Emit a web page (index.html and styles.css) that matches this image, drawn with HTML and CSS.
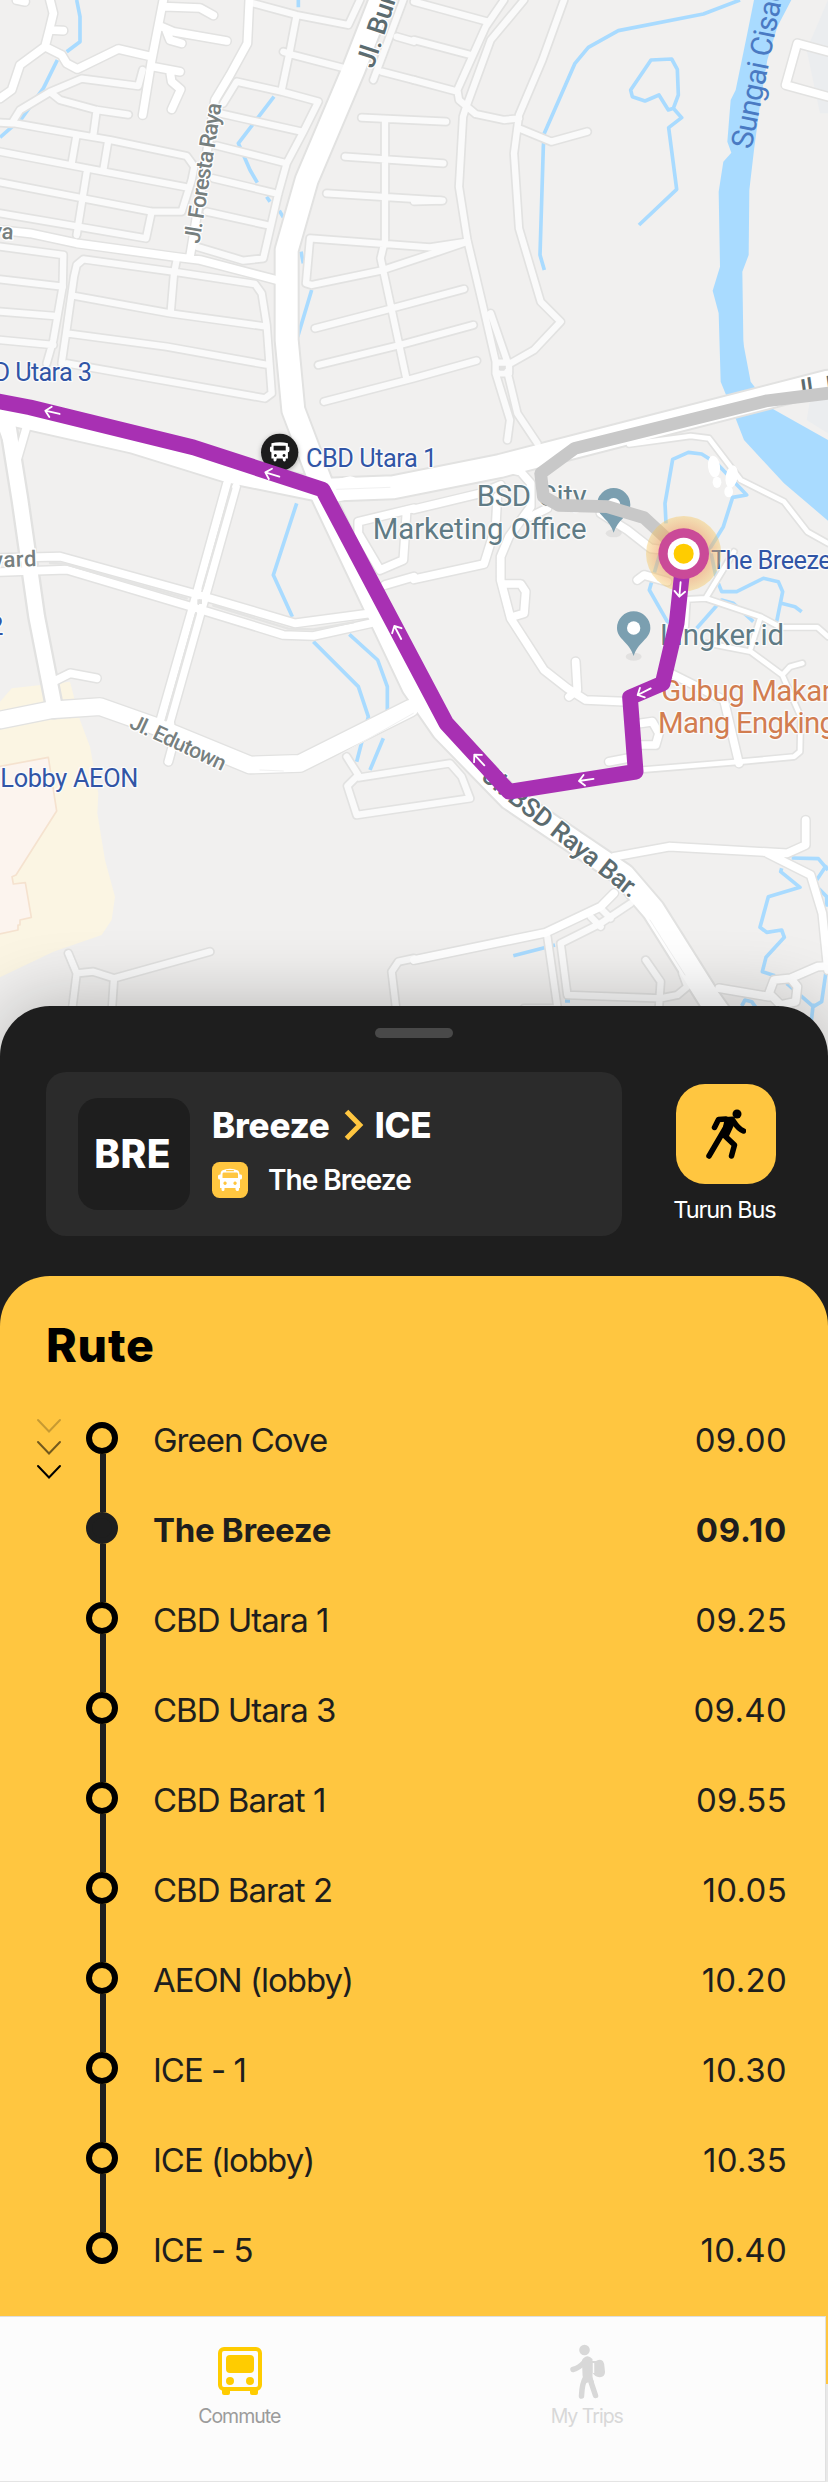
FILE: index.html
```
<!DOCTYPE html>
<html lang="id">
<head>
<meta charset="utf-8">
<title>Rute – Breeze ICE</title>
<link rel="stylesheet" href="styles.css">
</head>
<body>
<main class="screen">
  <svg class="map" viewBox="0 0 2484 3180" role="img" aria-label="Peta rute">
    <defs>
      <g id="lanes">
        <g>
          <path d="M0 368 35 370 60 330 150 276 245 236 415 258 428 210M150 276 180 300 290 330 385 344M290 330 280 405M0 368 45 370 230 403 330 420 560 468 583 500 575 540 545 635 455 635 0 547M0 455 260 505 560 562M230 403 215 490M325 420 310 510M262 505 230 705M455 635 438 715 235 680 0 640M0 740 190 765 188 860 0 838M0 935 165 948"/>
          <path d="M185 1090 198 1000 222 830 230 795 250 778 520 815 765 852 785 880 800 975 815 1180 795 1195 200 1090M225 888 510 940 800 980M200 1000 500 1040 805 1095M530 780 522 820 512 938M0 1020 160 1035M188 860 160 1020 140 1090"/>
          <path d="M590 740 730 782 790 775 835 580 860 490 910 395 955 305 845 275 710 245 670 310M660 340 905 395M650 437 860 490M640 535 835 582M620 635 800 675M760 10 890 45 1045 75 1080 0M890 45 870 150 845 270M1035 205 880 165 850 155"/>
          <path d="M1210 0 1120 240M1190 110 1242 125M1145 215 1242 240M1085 353 1338 365M1035 470 1330 490M980 580 1328 602M1155 360 1155 720 1142 775 1220 1140M1402 725 1290 742 930 715 918 850 935 855 1142 812 1300 760 1402 725M945 985 1150 932 1392 867M955 1095 1200 1035 1420 975M972 1205 1240 1135 1430 1082"/>
        </g>
        <g transform="translate(1242 0)">
          <path d="M0 5 220 65M0 120 170 165M0 240 130 275M270 0 215 80 130 270 135 300 185 342 270 360 315 355M330 0 230 120 155 325 147 350 135 560 160 720 205 910 245 1085M0 604 80 602M450 0 385 180 315 345 300 460 315 685 380 905 440 965 360 1050 290 1090M315 385 412 425 520 395M230 940 280 1085M245 1088h40v32h-40zM245 1120 288 1260 280 1320M280 1115 310 1240 370 1330"/>
        </g>
        <g transform="translate(0 2040)">
          <path d="M205 820 230 880 215 1000M230 880 280 875 342 895 630 815M342 895 335 1000M1242 835 1195 845 1175 875 1190 1000M1040 230 1075 285 1042 318 1070 405 1410 355 1385 290 1350 250 1075 293"/>
        </g>
        <g transform="translate(1242 2040)">
          <path d="M650 670 560 730 440 790 460 945 740 955 790 945 820 920 805 880M695 840 740 905 735 980M400 770 430 980M530 710 560 740M560 685 590 715M330 985 430 985"/>
        </g>
      </g>
      <g id="streets">
        <g>
          <path d="M50 0 75 5M150 0 160 40 148 90 135 140 60 195 35 270 0 295M150 90 190 92M135 140 185 165 200 190 232 207 355 147 455 170M490 0 455 180 428 345M490 20 600 24 640 46M485 80 520 95 680 123M500 95 510 120 545 130M460 200 540 215M510 215 515 245 542 268 515 328M0 690 90 700 230 730 520 770 600 780 830 840M748 0 742 130 690 225 645 300 605 560 570 770"/>
          <path d="M0 1260 50 1400M80 1280 45 1400M0 1674 180 1670 590 1783 885 1870 1110 1840M0 1716 200 1709 580 1822 850 1905 940 1908 1120 1868M681 1450 587 1790 480 2165M708 1460 613 1800 510 2165 520 2230 505 2285M170 2040 210 2020 290 2035M1242 1525 1075 1565 1075 1600 1140 1710 1210 1680 1220 1530M1155 1755 1242 1730"/>
        </g>
        <g transform="translate(1242 1020)">
          <path d="M0 508 200 460 260 435M0 718 210 672 245 560 250 470M250 380 320 395 350 430 350 500 285 590 260 650 260 720 290 835 390 990 460 1045 515 1080 630 1085M350 530 400 505M265 732 320 732 335 755 330 820 290 832M560 520 640 570 710 625 750 630M670 720 690 705 760 725M485 965 490 1050 465 1070M770 1000 930 1080 975 1270M680 1150 715 1145 735 1180 725 1215 680 1215M585 1265 640 1255"/>
        </g>
        <g transform="translate(1242 2040)">
          <path d="M600 530 765 500 1120 520 1175 495V420M1060 520 1190 585 1225 700 1242 870M600 640 560 680 395 758 0 840M1242 858 1210 860 1130 895 1080 900 1065 940 1100 975 1145 965 1150 920 1130 895M915 925 1065 950"/>
          <path d="M1242 155 1150 130 1115 255 1242 290" transform="translate(0 -2040)"/>
        </g>
      </g>
      <g id="paths">
        <path d="M1887 1333 2072 1308 2127 1315 2222 1440 2352 1505 2422 1595 2484 1630M2202 1655 2117 1795 2062 1798 2057 1880M2117 1795 2282 1850 2342 1882 2452 1882 2484 1910M2282 1850 2252 1945M2122 1930 2252 1955 2347 2025 2402 2150 2400 2255 2382 2270 2222 2285 1892 2312M2347 2025 2370 2000 2407 1990"/>
      </g>
      <g id="avenues">
        <path d="M0 2160 150 2130 300 2120 470 2180 750 2295 900 2290 1230 2125" stroke-width="50"/>
        <path d="M20 1250 60 1500 110 1850 165 2130" stroke-width="44"/>
        <path d="M1150 -20 1060 210 920 540 860 750 860 1020 880 1230 975 1480 1050 1462" stroke-width="66"/>
        <path d="M0 1235 400 1325 690 1415 960 1470 1180 1462 1500 1398 1880 1300 2484 1145" stroke-width="66"/>
        <path d="M960 1470 1240 2060 1330 2190 1530 2395 1870 2625 1960 2730 2130 3000 2180 3070" stroke-width="66"/>
      </g>
    </defs>

    <rect width="2484" height="3180" fill="#f1f0ef"/>
    <path fill="#fbf5e3" d="M0 2105 35 2065 210 2045 240 2160 270 2240 295 2380 292 2440 315 2580 345 2690 335 2760 305 2805 160 2855 0 2932Z"/>
    <path class="mall" d="M-5 2300 145 2272 170 2433 48 2625 36 2630 40 2652 76 2648 94 2752 60 2760V2775H54V2790L-5 2803Z"/>
    <path fill="#ebedef" d="M2484 0 2420 150 2460 340 2484 340ZM2484 1160 2430 1200 2420 1260 2484 1300Z"/>

    <g class="water">
      <path d="M230 0 240 50V125L200 155M172 180 130 265 65 355 0 412M895 0V22M822 290 715 430 750 510 772 548M800 590 810 605M838 632 850 652M903 755 910 790M935 870 893 1010M850 1210 880 1300M890 1510 820 1725 877 1850M940 1925 1075 2060 1105 2150 1070 2285M1048 1903 1133 1980 1162 2060V2130M1150 2215 1110 2310"/>
      <path d="M2220 0 2110 42 1855 92 1765 142 1725 190 1633 400 1630 440 1620 765 1633 810M1917 675 2030 568 2006 383 2045 353 2020 325 2035 285 2032 208 2015 177 1953 180 1892 270 1897 290 1935 303 1977 285 2005 330 2020 325"/>
      <path d="M1998 1570 1995 1510 2018 1378 2065 1357 2105 1362 2150 1390 2240 1485 2198 1492 2170 1580 2130 1645 2150 1740M1980 1660 1948 1770 2005 1870M2090 1885 2165 1800 2200 1810 2260 1865M2155 1750 2165 1775 2210 1775 2290 1735 2335 1745 2348 1775 2330 1865M2344 1810 2385 1820 2405 1835"/>
      <path d="M2375 2574 2455 2576 2484 2610M2345 2605 2342 2615 2400 2662 2305 2690 2280 2782 2300 2797 2345 2790 2353 2812 2298 2872 2287 2915 2325 2927M2450 2640 2480 2595M2450 2660 2480 2690V2720M2478 2915 2465 3005 2440 3020 2360 2950M2225 3018 2235 3000 2255 3005 2280 3040M2440 3010 2432 3080M1540 2867 1665 2835M1695 3003H1710"/>
      <path class="river" d="M2262 0 2242 100 2207 270 2192 300 2182 425 2194 458 2170 485 2156 575 2160 800 2138 872 2156 940 2162 1145 2204 1248 2232 1320 2352 1450 2484 1562V1320L2312 1223 2252 1145 2232 1040 2230 1020 2227 815 2246 765 2248 570 2262 450 2282 300 2302 180 2332 80 2374 0Z"/>
    </g>

    <g class="casing">
      <use href="#lanes" stroke-width="29"/>
      <use href="#streets" stroke-width="32"/>
      <use href="#paths" stroke-width="24"/>
      <g stroke-width="78"><path d="M1150 -20 1060 210 920 540 860 750 860 1020 880 1230 975 1480M0 1235 400 1325 690 1415 960 1470 1180 1462 1500 1398 1880 1300 2484 1145M960 1470 1240 2060 1330 2190 1530 2395 1870 2625 1960 2730 2130 3000 2180 3070"/></g>
      <path stroke-width="58" d="M0 2160 150 2130 300 2120 470 2180 750 2295 900 2290 1230 2125M20 1250 60 1500 110 1850 165 2130"/>
    </g>
    <use href="#lanes" class="road lane"/>
    <use href="#streets" class="road street"/>
    <use href="#paths" class="road footway"/>
    <path class="gap" d="M150 1689 190 1691 560 1795M640 1817 865 1886 940 1888 1060 1867M694 1465 608 1765M588 1840 498 2160"/>
    <rect class="gap-box" x="592" y="1798" width="14" height="14"/>
    <rect class="gap-box" x="1499" y="1098" width="14" height="14"/>
    <use href="#avenues" class="road"/>
    <path class="median" d="M1010 1468 1170 1462M1240 2140 1010 2270M780 2310 850 2313M1950 2760 2055 2925"/>

    <g class="road-label">
      <text transform="translate(598 733) rotate(-81)" font-size="67" textLength="426">Jl. Foresta Raya</text>
      <text class="major" transform="translate(1120 208) rotate(-72)" font-size="80" textLength="330">Jl. Bunga</text>
      <text x="-28" y="716" font-size="66" transform="rotate(4 0 718)">ya</text>
      <text x="-78" y="1702" font-size="66" textLength="188" transform="rotate(-2 0 1702)">levard</text>
      <text transform="translate(385 2182) rotate(25)" font-size="64" textLength="310">Jl. Edutown</text>
      <text class="major" transform="translate(1442 2338) rotate(38.500)" font-size="78" textLength="575">Jl. BSD Raya Bar.</text>
      <text class="major" transform="translate(2384 1194) rotate(-8)" font-size="74">Jl. BSD</text>
    </g>
    <text class="river-label" transform="translate(2254 450) rotate(-78.500)" font-size="90" textLength="500">Sungai Cisad</text>
    <g fill="#fff">
      <ellipse cx="2142" cy="1400" rx="18" ry="33" transform="rotate(-8 2142 1400)"/>
      <ellipse cx="2151" cy="1447" rx="13" ry="17"/>
      <ellipse cx="2195" cy="1430" rx="18" ry="34" transform="rotate(10 2195 1430)"/>
      <ellipse cx="2186" cy="1475" rx="13" ry="17"/>
    </g>

    <g class="place">
      <text x="1430" y="1518" textLength="330">BSD City</text>
      <text x="1118" y="1617" textLength="642">Marketing Office</text>
      <text x="1980" y="1934" textLength="372">Lingker.id</text>
      <g class="food">
        <text x="1984" y="2103" textLength="530">Gubug Makan</text>
        <text x="1974" y="2200" textLength="534">Mang Engking</text>
      </g>
    </g>
    <g class="stop-label">
      <text x="-112" y="1142" textLength="388">CBD Utara 3</text>
      <text x="918" y="1402" textLength="394">CBD Utara 1</text>
      <text x="2133" y="1706" textLength="362">The Breeze</text>
      <text x="1" y="2361" textLength="414">Lobby AEON</text>
      <text x="-32" y="1906">2</text>
    </g>

    <g>
      <g transform="translate(1841 1514)">
        <ellipse cy="86" rx="24" ry="12" fill="#000" opacity=".06"/>
        <path fill="#7b9fb0" d="M0-50A50 50 0 0 1 50 0C50 34 14 40 0 84-14 40-50 34-50 0A50 50 0 0 1 0-50Z"/><circle r="20" fill="#fff"/>
      </g>
      <g transform="translate(1901 1884)">
        <ellipse cy="86" rx="24" ry="12" fill="#000" opacity=".06"/>
        <path fill="#7b9fb0" d="M0-50A50 50 0 0 1 50 0C50 34 14 40 0 84-14 40-50 34-50 0A50 50 0 0 1 0-50Z"/><circle r="20" fill="#fff"/>
      </g>
    </g>

    <circle class="bus-marker" cx="839" cy="1357" r="56" fill="#1c1c1c"/>
    <g transform="translate(839 1357) scale(2.6)" fill="#fff">
      <path fill-rule="evenodd" d="M-9.500-10.500Q0-13 9.500-10.500V-6.500H11Q12 0 9.500 0V7H7Q7.500 10.500 5.500 10.500T3.500 7H-3.500Q-3.500 10.500-5.500 10.500T-7 7H-9.500V0Q-12 0-11-6.500H-9.500ZM-7-7.500V-2H7V-7.500ZM-5 2a1.700 1.700 0 1 0 .1 0ZM5 2a1.700 1.700 0 1 0 .1 0Z"/>
    </g>

    <path class="past-route" d="M2490 1179 2302 1202 1724 1345 1622 1420 1630 1490 1677 1516 1822 1520 1932 1553 2010 1625"/>
    <radialGradient id="halo"><stop offset=".6" stop-color="#ee9a66" stop-opacity=".6"/><stop offset="1" stop-color="#f5c75f" stop-opacity=".42"/></radialGradient>
    <circle cx="2051" cy="1661" r="113" fill="url(#halo)"/>
    <path class="route" d="M-10 1203 90 1222 580 1342 968 1469 1339 2170 1527 2375 1907 2315 1890 2092 1988 2050 2030 1870 2046 1720"/>
    <g class="direction">
      <path d="M44 0H0M16-16 0 0 16 16" transform="translate(136 1232) rotate(13)"/>
      <path d="M44 0H0M16-16 0 0 16 16" transform="translate(796 1417) rotate(17)"/>
      <path d="M44 0H0M16-16 0 0 16 16" transform="translate(1183 1878) rotate(62)"/>
      <path d="M44 0H0M16-16 0 0 16 16" transform="translate(1423 2264) rotate(47)"/>
      <path d="M44 0H0M16-16 0 0 16 16" transform="translate(1737 2343) rotate(-8)"/>
      <path d="M44 0H0M16-16 0 0 16 16" transform="translate(1913 2085) rotate(-27)"/>
      <path d="M44 0H0M16-16 0 0 16 16" transform="translate(2038 1790) rotate(-85)"/>
    </g>
    <circle cx="2051" cy="1661" r="76" fill="#ca4a98"/>
    <circle cx="2051" cy="1661" r="48" fill="#fff"/>
    <circle cx="2051" cy="1661" r="30" fill="#fc0"/>
  </svg>

  <section class="sheet">
    <div class="handle"></div>
    <div class="trip">
      <div class="trip-card">
        <div class="code">BRE</div>
        <div class="trip-info">
          <h2 class="trip-title"><span class="from">Breeze</span>
            <svg class="chevron" viewBox="0 0 20 32"><path d="M2.500 2.500 15.800 16 2.500 29.500"/></svg>
            <span class="to">ICE</span></h2>
          <div class="trip-stop">
            <svg class="bus-badge" viewBox="0 0 36 36"><rect width="36" height="36" rx="7.500" fill="#ffc640"/>
              <path fill="#fff" fill-rule="evenodd" d="M10 8.500Q18 5 26 8.500Q27.500 9.500 27.500 12.500H29Q30 12.500 30 14V16Q30 17.500 28 17.500V26H27V27.500Q27 29 25.500 29T23.500 27.500V26H12.500V27.500Q12.500 29 11 29T9.500 27.500V26H8V17.500Q6 17.500 6 16V14Q6 12.500 8 12.500H8.500Q8.500 9.500 10 8.500ZM11.500 10.500Q10.500 10.500 10.500 12V16H26V12Q26 10.500 25 10.500ZM13 19.500a1.700 1.700 0 1 0 .1 0ZM23 19.500a1.700 1.700 0 1 0 .1 0Z"/>
              <rect x="14" y="8" width="8" height="1.300" rx=".6" fill="#ffc640"/></svg>
            <span>The Breeze</span>
          </div>
        </div>
      </div>
      <button class="alight" type="button">
        <span class="alight-icon">
          <svg viewBox="0 0 40 50"><circle cx="31" cy="5" r="4.500"/>
            <path class="limb" d="M8.500 18.500 12.500 10.500 20 10M28 13Q32 19.500 37.500 22M3 47 20 18M19 27 28.500 36 25.500 47"/>
            <path d="M19 8 27 7.500Q30 9 29.500 13L23 27 15 28Z"/></svg>
        </span>
        <span class="alight-label">Turun Bus</span>
      </button>
    </div>

    <section class="route-list">
      <h1>Rute</h1>
      <svg class="flow" viewBox="0 0 26 62"><path opacity=".22" d="M2 2 13 13.500 24 2"/><path opacity=".55" d="M2 24 13 35.500 24 24"/><path d="M2 48 13 59.500 24 48"/></svg>
      <ol class="stops">
        <li><i></i><span>Green Cove</span><time>09.00</time></li>
        <li class="current"><i></i><span>The Breeze</span><time>09.10</time></li>
        <li><i></i><span>CBD Utara 1</span><time>09.25</time></li>
        <li><i></i><span>CBD Utara 3</span><time>09.40</time></li>
        <li><i></i><span>CBD Barat 1</span><time>09.55</time></li>
        <li><i></i><span>CBD Barat 2</span><time>10.05</time></li>
        <li><i></i><span>AEON (lobby)</span><time>10.20</time></li>
        <li><i></i><span>ICE - 1</span><time>10.30</time></li>
        <li><i></i><span>ICE (lobby)</span><time>10.35</time></li>
        <li><i></i><span>ICE - 5</span><time>10.40</time></li>
      </ol>
    </section>
  </section>

  <div class="tabs-edge">
    <nav class="tabs">
      <a class="tab active">
        <svg viewBox="0 0 44 56"><rect x="2" y="6" width="40" height="40" rx="4" fill="none" stroke="#fc0" stroke-width="4"/><rect x="8" y="12" width="28" height="18" rx="4"/><circle cx="12" cy="38" r="4"/><circle cx="32" cy="38" r="4"/><rect x="4" y="45" width="8" height="7" rx="2"/><rect x="32" y="45" width="8" height="7" rx="2"/></svg>
        <span>Commute</span>
      </a>
      <a class="tab">
        <svg viewBox="0 0 44 56"><circle cx="19.500" cy="7" r="5.300"/><path class="limb" d="M8 26.500Q14 25 19 19.500M21 34Q17 40 16.500 53M24 33 30.500 52.500"/><path d="M17 17Q22 10 27.500 16V18H31Q39 14 39.500 24L40 29Q40 35 33 34Q29.500 33 27.500 30V35L29 39H24L19 41 17.500 32Z"/><path d="M28.500 20V30" stroke="#fcfcfc" stroke-width="1.500" fill="none"/></svg>
        <span>My Trips</span>
      </a>
    </nav>
  </div>
</main>
</body>
</html>
```
FILE: styles.css
```
* { box-sizing: border-box; }

body {
  margin: 0;
  font-family: Inter, "Liberation Sans", sans-serif;
  background: #fcfcfc;
}

.screen {
  display: flex;
  flex-direction: column;
  width: 828px;
  height: 2482px;
  overflow: hidden;
}

/* Map */
.map {
  flex: none;
  width: 828px;
  height: 1060px;
  font-family: Roboto, "Liberation Sans", sans-serif;
}
.map path, .map use { stroke-linejoin: round; stroke-linecap: round; }
.water path { fill: none; stroke: #a9dbff; stroke-width: 11; stroke-linecap: butt; }
.water .river { fill: #a9dbff; stroke: none; }
.mall { fill: #fcf4ee; stroke: #f5e2cf; stroke-width: 5; }
.casing { fill: none; stroke: #e2e2e1; }
.road { fill: none; stroke: #fff; }
.lane { stroke: #fafafa; stroke-width: 19; }
.street { stroke-width: 23; }
.footway { stroke-width: 14; }
.gap { fill: none; stroke: #e4e4e3; stroke-width: 7; }
.gap-box { fill: #e2e2e1; }
.median { fill: none; stroke: #f1f1f1; stroke-width: 3; }
.road-label { fill: #77807f; font-weight: 500; stroke: #fff; stroke-width: 8; stroke-linejoin: round; paint-order: stroke; }
.road-label .major { fill: #5c6c70; }
.river-label { fill: #4a7ac3; }
.place, .stop-label { paint-order: stroke; stroke: #fbfbfb; stroke-width: 8; stroke-linejoin: round; }
.place { fill: #607b85; font-size: 88px; }
.food { fill: #d27d50; }
.stop-label { fill: #3155a6; font-size: 76px; }
.bus-marker { filter: drop-shadow(0 4px 8px rgba(0, 0, 0, .3)); }
.route { fill: none; stroke: #a830b3; stroke-width: 47; }
.past-route { fill: none; stroke: #c8c8c8; stroke-width: 38; }
.direction { fill: none; stroke: #fff; stroke-width: 5.5; }

/* Bottom sheet */
.sheet {
  flex: none;
  display: flex;
  flex-direction: column;
  height: 1310px;
  margin-top: -54px;
  padding-top: 22px;
  border-radius: 50px 50px 0 0;
  background: #1e1e1e;
  box-shadow: 0 -4px 70px rgba(0, 0, 0, .24);
  z-index: 1;
}
.handle {
  width: 78px;
  height: 10px;
  align-self: center;
  border-radius: 5px;
  background: #494949;
}
.trip {
  display: flex;
  height: 164px;
  margin: 34px 52px 40px 46px;
  justify-content: space-between;
}
.trip-card {
  display: flex;
  gap: 22px;
  width: 576px;
  padding: 26px 32px;
  border-radius: 20px;
  background: #2b2b2b;
  color: #fff;
}
.code {
  width: 112px;
  height: 112px;
  padding-right: 3px;
  border-radius: 20px;
  background: #1e1e1e;
  font-size: 39px;
  line-height: 112px;
  font-weight: 800;
  letter-spacing: .4px;
  text-align: center;
}
.trip-info { display: flex; flex-direction: column; gap: 17px; padding-top: 7px; }
.trip-title {
  display: flex;
  align-items: center;
  height: 40px;
  margin: 0;
  font-size: 35px;
  font-weight: 800;
  letter-spacing: -.2px;
}
.chevron { width: 20px; height: 32px; margin: 0 11px 0 14px; fill: none; stroke: #ffc640; stroke-width: 5; }
.trip-stop {
  display: flex;
  align-items: center;
  gap: 20px;
  font-size: 28px;
  font-weight: 600;
  letter-spacing: -1px;
}
.bus-badge { width: 36px; height: 36px; }
.alight {
  display: flex;
  flex-direction: column;
  align-items: center;
  width: 100px;
  padding: 12px 0 0;
  border: 0;
  background: none;
  color: #fff;
  font: 400 23.5px/30px Inter, "Liberation Sans", sans-serif;
  white-space: nowrap;
}
.alight-icon {
  display: grid;
  place-items: center;
  width: 100px;
  height: 100px;
  margin-bottom: 11px;
  border-radius: 29px;
  background: #ffc640;
}
.alight-icon svg { width: 40px; height: 50px; }
.limb { fill: none; stroke: #000; stroke-width: 5.5; stroke-linecap: round; stroke-linejoin: round; }
.alight-label { letter-spacing: -1.1px; padding-right: 3px; }

/* Stops */
.route-list {
  display: grid;
  grid-template-columns: 50px 1fr;
  grid-template-rows: 117px 1fr;
  flex: 1;
  padding: 0 40px 0 36px;
  border-radius: 50px 50px 0 0;
  background: #ffc640;
}
.route-list h1 {
  grid-column: 1 / 3;
  margin: 0 0 0 10px;
  padding-top: 41px;
  font-size: 46.5px;
  line-height: 56px;
  font-weight: 800;
  letter-spacing: .8px;
}
.flow { width: 26px; height: 62px; margin-top: 25px; fill: none; stroke: #000; stroke-width: 2; stroke-linecap: round; }
.stops { margin: 0; padding: 0; list-style: none; color: #1e1e1e; font-size: 33px; }
.stops li {
  display: grid;
  grid-template-columns: 32px 1fr auto;
  column-gap: 35px;
  align-items: center;
  height: 90px;
  letter-spacing: -1px;
  line-height: 40px;
}
.stops i {
  width: 32px;
  height: 32px;
  border: 6px solid #000;
  border-radius: 50%;
  position: relative;
}
.stops li:not(:last-child) i::after {
  content: "";
  position: absolute;
  left: 8px;
  top: 26px;
  width: 6px;
  height: 58px;
  background: #1e1e1e;
}
.stops .current { font-weight: 700; letter-spacing: -.3px; }
.stops .current i { border-color: #1e1e1e; background: #1e1e1e; }
.stops span, .stops time { padding-top: 4px; }
.stops time { padding-right: 1px; letter-spacing: .3px; }
.stops .current time { letter-spacing: .8px; }

/* Tab bar */
.tabs-edge {
  flex: none;
  padding-right: 2px;
  background: linear-gradient(#ffc640 68px, #e8e8e8 68px);
  position: relative;
  z-index: 2;
}
.tabs {
  display: flex;
  height: 166px;
  padding: 26px 64px 0 66px;
  border-top: 1px solid #dedede;
  border-right: 1px solid #e0e0e0;
  border-bottom: 1px solid #e4e4e4;
  background: #fcfcfc;
}
.tab {
  flex: 1;
  display: flex;
  flex-direction: column;
  align-items: center;
  color: #d8d8d8;
  fill: #d8d8d8;
  font-size: 19.5px;
  line-height: 28px;
  letter-spacing: -1px;
}
.tab svg { width: 44px; height: 56px; }
.tab .limb { stroke: #d8d8d8; }
.tab span { margin: 3px 1px 0 0; }
.active { color: #9b9b9b; fill: #fc0; }
```
